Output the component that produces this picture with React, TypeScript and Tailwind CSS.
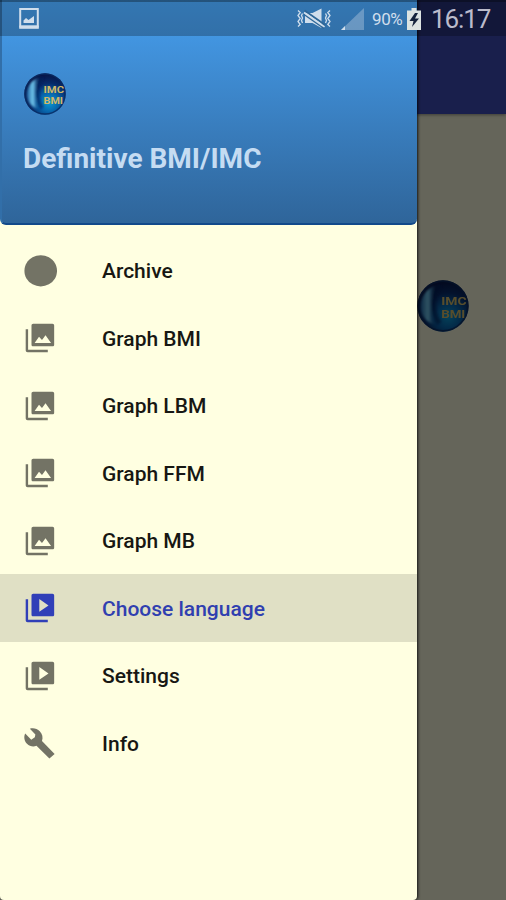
import { useState } from 'react';
import clsx from 'clsx';

type IconName = 'circle' | 'photos' | 'videos' | 'wrench';

interface MenuItem {
  id: string;
  label: string;
  icon: IconName;
}

const menuItems: MenuItem[] = [
  { id: 'archive', label: 'Archive', icon: 'circle' },
  { id: 'bmi', label: 'Graph BMI', icon: 'photos' },
  { id: 'lbm', label: 'Graph LBM', icon: 'photos' },
  { id: 'ffm', label: 'Graph FFM', icon: 'photos' },
  { id: 'mb', label: 'Graph MB', icon: 'photos' },
  { id: 'language', label: 'Choose language', icon: 'videos' },
  { id: 'settings', label: 'Settings', icon: 'videos' },
  { id: 'info', label: 'Info', icon: 'wrench' },
];

const iconPaths: Record<IconName, string> = {
  circle: 'M12.5 .9a11.5 11 0 1 0 .01 0z',
  photos:
    'M22 16.700V3.200c0-.7-.5-1.200-1.200-1.200H7.200C6.500 2 6 2.500 6 3.200v13.500c0 .7.5 1.200 1.200 1.200h13.600c.7 0 1.200-.5 1.200-1.200zM8.200 15.600l3.100-4.500 2.100 2.300 2.500-3.300 3.900 5.500zM1.900 5.800v14.800c0 .8.6 1.400 1.400 1.400H17.500v-1.700H3.600V5.800z',
  videos:
    'M1.900 5.800v14.800c0 .8.6 1.400 1.400 1.400H17.500v-1.700H3.600V5.800zM20.800 2H7.200C6.500 2 6 2.500 6 3.200v13.500c0 .7.5 1.200 1.200 1.200h13.600c.7 0 1.200-.5 1.200-1.200V3.200c0-.7-.5-1.200-1.200-1.200zM11.500 14.600V5.700l6.500 4.450z',
  wrench:
    'M23 19.600L13.800 10.200c.9-2.500.3-5.200-1.600-7.100C10.300 1.200 7.500.5 5 1.300L9 5.500 8.600 7.500 6 9.200 1.600 4.700C.4 7.100.9 10.200 2.900 12.200c1.900 1.900 4.600 2.400 6.900 1.500l9.400 9.200z',
};

function MenuIcon({ name }: { name: IconName }) {
  return (
    <svg
      className={clsx('mt-px shrink-0', name === 'wrench' ? 'mr-px h-[33px] w-[33px]' : 'h-[34px] w-[34px]')}
      viewBox="0 0 24 24"
      fill="currentColor"
      fillRule="evenodd"
    >
      <path d={iconPaths[name]} />
    </svg>
  );
}

function Logo({ id, className }: { id: string; className: string }) {
  return (
    <svg className={className} viewBox="0 0 42 42">
      <defs>
        <radialGradient id={`${id}-ball`} cx="60%" cy="70%" r="66%">
          <stop offset="0" stopColor="#0a9bd4" />
          <stop offset="0.35" stopColor="#0865ac" />
          <stop offset="0.7" stopColor="#062a69" />
          <stop offset="1" stopColor="#07174a" />
        </radialGradient>
        <linearGradient id={`${id}-shine`} x1="0" y1="0" x2="1" y2="0">
          <stop offset="0" stopColor="#1b5f9f" />
          <stop offset="0.5" stopColor="#74c9ee" />
          <stop offset="1" stopColor="#1a6cae" stopOpacity="0.1" />
        </linearGradient>
        <filter id={`${id}-soft`} x="-20%" y="-20%" width="140%" height="140%">
          <feGaussianBlur stdDeviation="0.9" />
        </filter>
      </defs>
      <circle cx="21" cy="21" r="20.700" fill={`url(#${id}-ball)`} />
      <g filter={`url(#${id}-soft)`}>
        <path d="M15 4C11 11 10 29 14 36C-1 31-1 11 15 4z" fill={`url(#${id}-shine)`} />
        <path d="M19 4c-7 9-7 22-1 31" fill="none" stroke="#041c5a" strokeWidth="4" opacity="0.6" />
      </g>
      <circle cx="21" cy="21" r="20" fill="none" stroke="#0a2a62" strokeWidth="1.400" opacity="0.8" />
      <g fill="#d0b868" fontFamily="Roboto, sans-serif" fontSize="9.500" fontWeight="700">
        <text x="19.500" y="19.800" textLength="20.500" lengthAdjust="spacingAndGlyphs">IMC</text>
        <text x="19.500" y="30.500" textLength="19.500" lengthAdjust="spacingAndGlyphs">BMI</text>
      </g>
    </svg>
  );
}

function StatusBar() {
  return (
    <div className="absolute inset-x-0 top-0 flex h-[35.500px] items-center border-t-2 border-black/30 bg-black/25 pr-[15px] pl-[19px] text-[#d0deec]">
      <svg className="h-[21px] w-[20px]" viewBox="0 0 20 21" fill="none" stroke="currentColor">
        <path d="M1.200 1h17.600v17.500H1.200z" strokeWidth="2" />
        <path d="M.2 19.200h19.600" strokeWidth="3.200" />
        <path d="M4.500 15v-2.500l2.500-2.500 2.500 2 5.500-4v7z" fill="currentColor" stroke="none" />
      </svg>
      <svg className="ml-auto h-[21px] w-[34px]" viewBox="0 0 34 21" fill="none" stroke="currentColor">
        <path d="M1 2.500l2.200 2-2.200 3 2.200 3-2.200 3 2.200 3-2.200 2M5.500 5.500l-1 2 1 2.500-1 2.500 1 2.500" strokeWidth="1.300" />
        <path d="M33 2.500l-2.200 2 2.200 3-2.200 3 2.200 3-2.200 3 2.200 2M28.500 5.500l1 2-1 2.500 1 2.500-1 2.500" strokeWidth="1.300" />
        <path d="M8 5h7.500l9-4.500v19.500l-9-5H8z" fill="currentColor" stroke="none" />
        <path d="M7.500 2.500l21 14.700" stroke="#2e6798" strokeWidth="2" />
        <path d="M7 4.400l20.500 14.600" strokeWidth="1.900" />
        <path d="M7 6.500l20 14" stroke="#2e6798" strokeWidth="1.300" />
      </svg>
      <svg className="ml-[10px] h-[22px] w-[23px]" viewBox="0 0 23 22" fill="currentColor">
        <path d="M0 22L23 0v22z" opacity="0.35" />
        <path d="M0 22l4-4v4z" />
      </svg>
      <span className="mt-[2px] ml-[8px] w-[32px] text-[17px] tracking-[-0.400px]">90%</span>
      <svg className="ml-[3px] h-[22px] w-[14px]" viewBox="0 0 14 22">
        <path d="M4.500 0h5v2.500H14V22H0V2.500h4.500z" fill="#dce3e1" />
        <path d="M8 5L2.500 13h4L5 19l7-8.500H8L11 5z" fill="#15233c" />
      </svg>
      <span className="mt-[2px] ml-[10px] w-[60px] text-[26px] tracking-[-1.100px] whitespace-nowrap text-[#bbbbcb]">
        16:17
      </span>
    </div>
  );
}

export default function App() {
  const [selected, setSelected] = useState('language');

  return (
    <div className="relative h-[900px] w-[506px] overflow-hidden bg-[#65655a] font-['Roboto',sans-serif]">
      <div className="h-[114px] bg-[#191f4c] shadow-[0_1px_3px_rgba(0,0,0,0.4)]" />
      <div className="mt-[166px] ml-[417px]">
        <Logo id="page" className="h-[52px] w-[52px] brightness-[0.42]" />
      </div>

      <aside className="absolute inset-y-0 left-0 flex w-[417px] flex-col overflow-hidden rounded-b-[4px] bg-[#ffffe1] shadow-[1px_0_3px_rgba(0,0,0,0.8)]">
        <header className="flex h-[225px] shrink-0 flex-col rounded-b-[6px] border-b-2 border-l-2 border-b-[#12498a] border-l-[#326fa9] bg-linear-to-b from-[#469fef] to-[#2f659a] pt-[73px] pl-[22px]">
          <Logo id="drawer" className="h-[42px] w-[42px]" />
          <h1 className="mt-[26px] -ml-px text-[28px] leading-[36px] font-bold text-[#c5dcf2]">Definitive BMI/IMC</h1>
        </header>

        <nav className="flex flex-col pt-[11.500px]">
          {menuItems.map((item) => (
            <button
              key={item.id}
              onClick={() => setSelected(item.id)}
              className={clsx(
                'flex h-[67.500px] items-center pl-[23px] text-left',
                selected === item.id ? 'bg-[#e0e0c5] text-[#303fb8]' : 'text-[#737365]'
              )}
            >
              <MenuIcon name={item.icon} />
              <span
                className={clsx(
                  'mt-[3px] ml-[45px] text-[21px] font-medium',
                  selected === item.id ? 'text-[#303fb0]' : 'text-[#171713]'
                )}
              >
                {item.label}
              </span>
            </button>
          ))}
        </nav>
      </aside>

      <StatusBar />
    </div>
  );
}
